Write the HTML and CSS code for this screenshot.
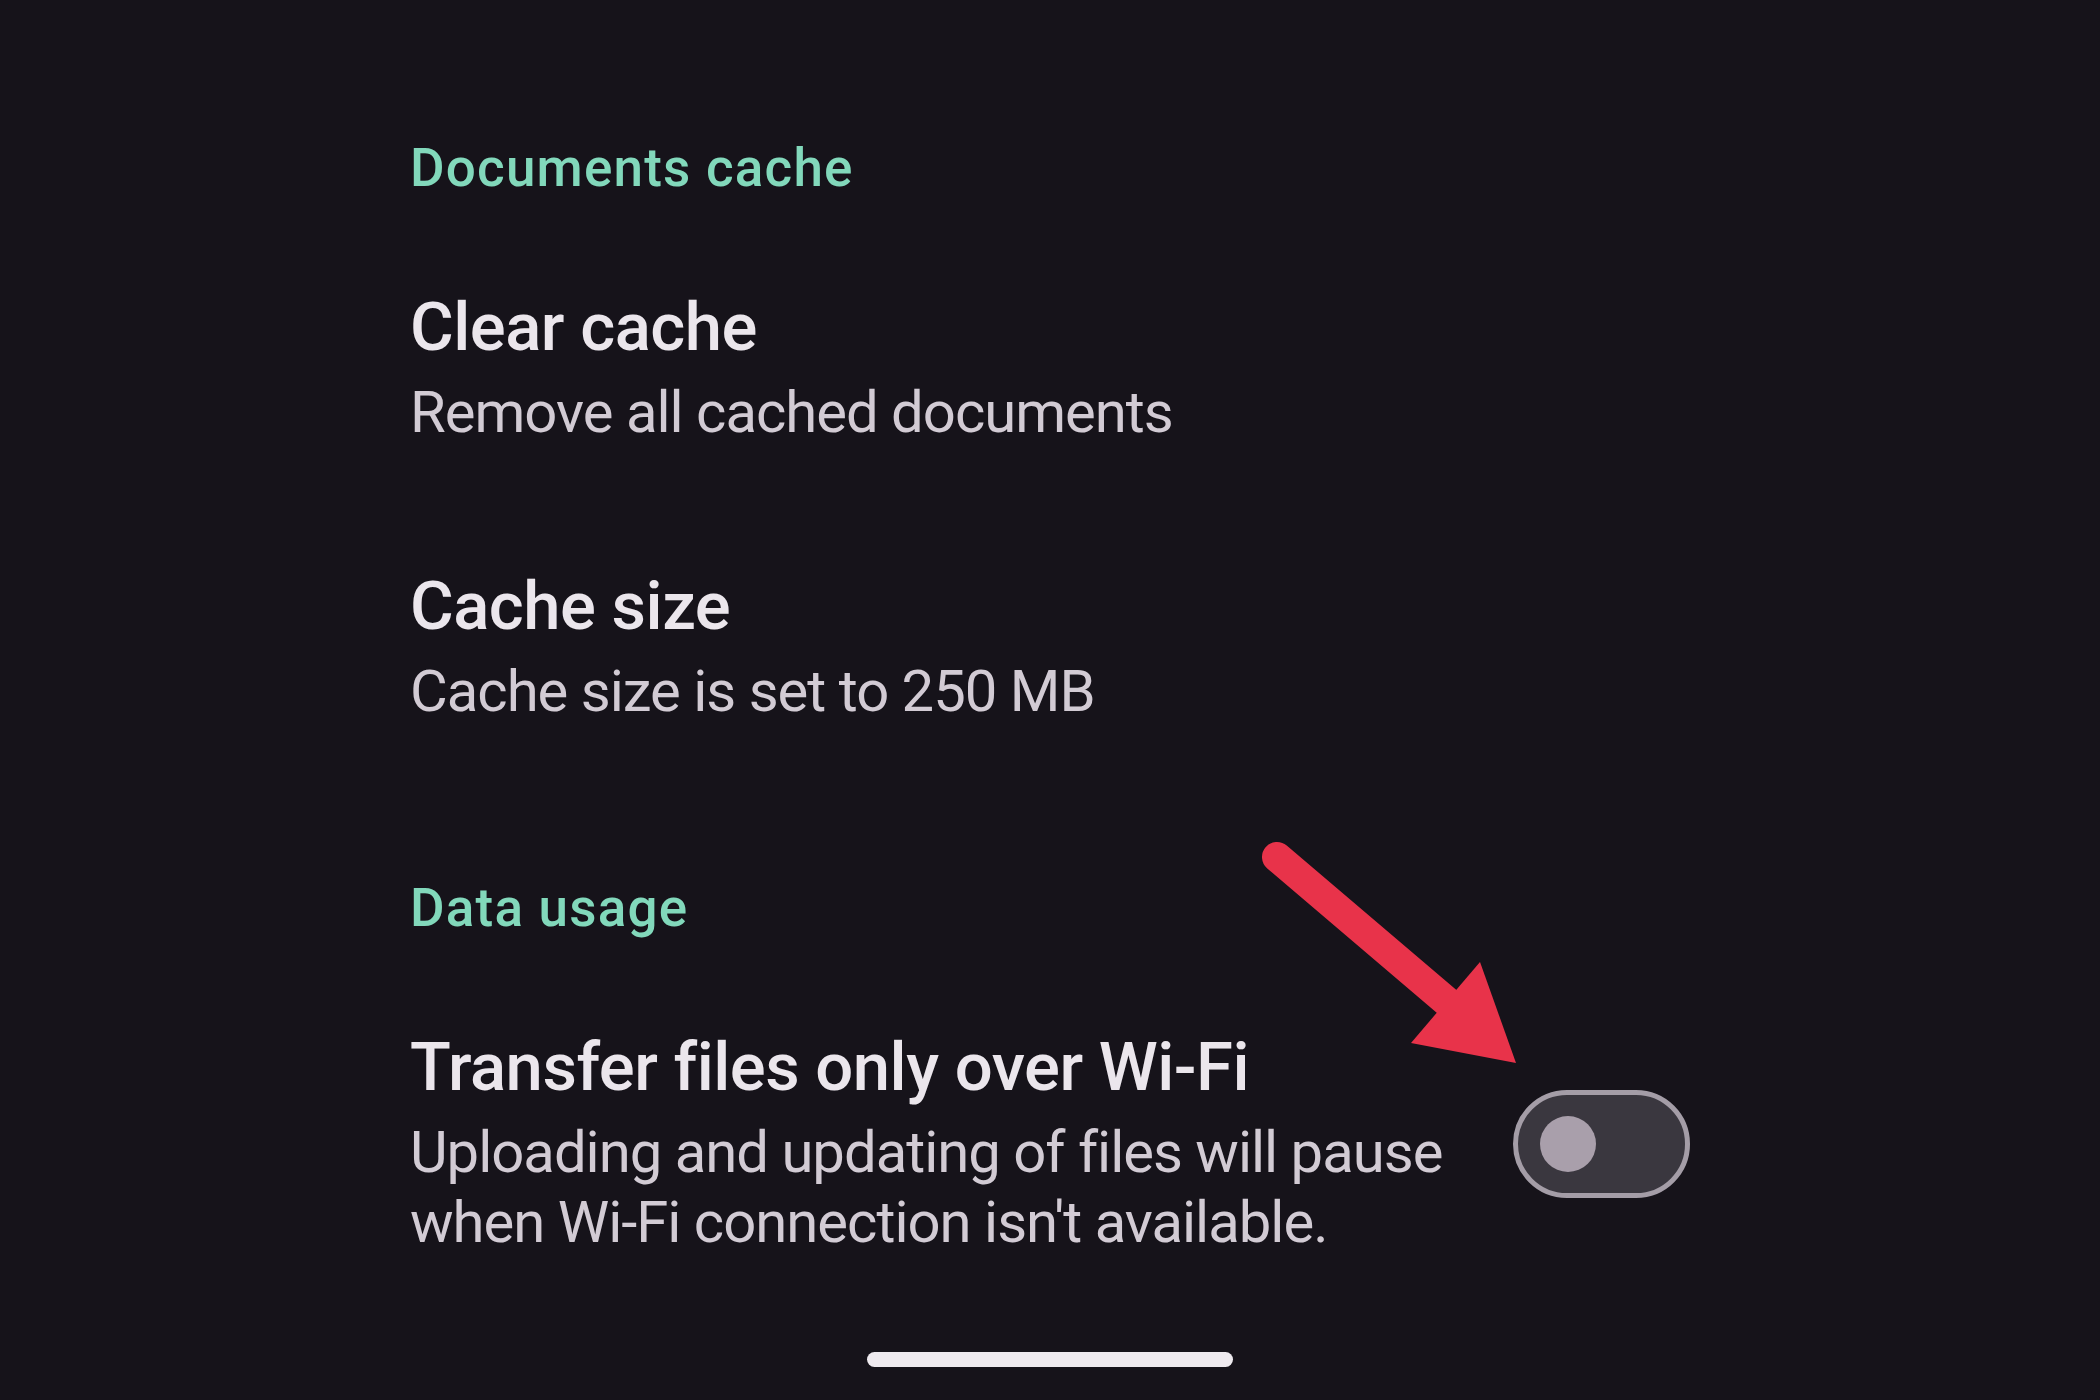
FILE: index.html
```html
<!DOCTYPE html>
<html lang="en">
<head>
<meta charset="utf-8">
<title>Settings</title>
<link rel="stylesheet" href="styles.css">
</head>
<body>
<div class="screen">
  <main class="settings">
    <section class="group">
      <h2 class="group-title">Documents cache</h2>
      <div class="item">
        <div class="item-text">
          <div class="item-title">Clear cache</div>
          <div class="item-sub">Remove all cached documents</div>
        </div>
      </div>
      <div class="item">
        <div class="item-text">
          <div class="item-title">Cache size</div>
          <div class="item-sub">Cache size is set to 250 MB</div>
        </div>
      </div>
    </section>
    <section class="group">
      <h2 class="group-title">Data usage</h2>
      <div class="item item-switch">
        <div class="item-text wide">
          <div class="item-title">Transfer files only over Wi-Fi</div>
          <div class="item-sub">Uploading and updating of files will pause when Wi-Fi connection isn't available.</div>
        </div>
        <div class="switch"><div class="knob"></div></div>
      </div>
    </section>
  </main>
  <div class="nav"><div class="handle"></div></div>
  <svg class="arrow" viewBox="1250 830 280 250" width="280" height="250" aria-hidden="true">
    <line x1="1277" y1="857" x2="1452" y2="1006" stroke="#e8334a" stroke-width="30" stroke-linecap="round"/>
    <polygon points="1480,962 1411,1043 1516,1063" fill="#e8334a"/>
  </svg>
</div>
</body>
</html>
```

FILE: styles.css
```css
html, body {
  margin: 0;
  padding: 0;
  background: #16131a;
}

.screen {
  position: relative;
  width: 2100px;
  height: 1400px;
  display: flex;
  flex-direction: column;
  font-family: Roboto, "Noto Sans", "Liberation Sans", sans-serif;
}

.settings {
  padding: 138px 0 0 410px;
  display: flex;
  flex-direction: column;
  gap: 122px;
}

.group {
  display: flex;
  flex-direction: column;
}

.group-title {
  margin: 0;
  font-size: 53px;
  line-height: 60px;
  font-weight: 500;
  letter-spacing: 1.2px;
  color: #82d8bb;
}

.item {
  padding: 93px 0 30px;
}

.item-text {
  display: flex;
  flex-direction: column;
  gap: 14px;
}

.item-title {
  font-size: 67px;
  line-height: 72px;
  font-weight: 500;
  letter-spacing: -0.5px;
  color: #ebe6ec;
}

.item-sub {
  font-size: 58px;
  line-height: 70px;
  font-weight: 400;
  letter-spacing: -1px;
  color: #d2cbd4;
}

.item-switch {
  width: 1280px;
  display: flex;
  align-items: center;
  justify-content: space-between;
}

.item-text.wide {
  width: 1080px;
}

.switch {
  width: 145px;
  height: 98px;
  border: 5px solid #a49da7;
  border-radius: 60px;
  background: #3a373f;
  display: flex;
  align-items: center;
  padding-left: 22px;
  box-sizing: content-box;
}

.knob {
  width: 56px;
  height: 56px;
  border-radius: 50%;
  background: #a99fab;
}

.nav {
  margin-top: auto;
  padding-bottom: 33px;
  display: flex;
  justify-content: center;
}

.handle {
  width: 366px;
  height: 15px;
  border-radius: 8px;
  background: #eeeaef;
}

.arrow {
  position: absolute;
  left: 1250px;
  top: 830px;
}
```
